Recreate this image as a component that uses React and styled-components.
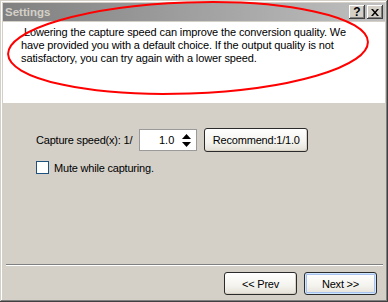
import React from "react";
import styled, { createGlobalStyle } from "styled-components";

const GlobalStyle = createGlobalStyle`
  html, body { margin: 0; padding: 0; background: #d4d0c8; }
  body { font-family: "Liberation Sans", Arial, sans-serif; }
`;

const Window = styled.div`
  position: relative;
  box-sizing: border-box;
  width: 388px;
  height: 302px;
  padding: 3px;
  background: #d4d0c8;
  box-shadow: inset -1px -1px #404040, inset 1px 1px #d4d0c8,
    inset -2px -2px #808080, inset 2px 2px #ffffff;
  display: flex;
  flex-direction: column;
  overflow: hidden;
`;

const TitleBar = styled.div`
  height: 18px;
  margin-bottom: 1px;
  display: flex;
  align-items: center;
  padding: 0 2px 0 2px;
  background: linear-gradient(to right, #808080, #c0c0c0);
`;

const TitleText = styled.span`
  font-family: "Liberation Sans", Arial, sans-serif;
  font-weight: bold;
  font-size: 11.5px;
  color: #d4d0c8;
`;

const TitleButtons = styled.div`
  margin-left: auto;
  display: flex;
  gap: 2px;
`;

const TitleButton = styled.div`
  width: 16px;
  height: 14px;
  box-sizing: border-box;
  background: #d4d0c8;
  box-shadow: inset -1px -1px #404040, inset 1px 1px #ffffff,
    inset -2px -2px #808080;
  display: flex;
  align-items: center;
  justify-content: center;
  font-family: "Liberation Sans", Arial, sans-serif;
  font-weight: bold;
  font-size: 12px;
  line-height: 1;
  color: #000;
`;

const Header = styled.div`
  height: 81px;
  background: #ffffff;
  box-sizing: border-box;
  padding: 4px 6px 0 18px;
`;

const HeaderText = styled.p`
  margin: 0;
  font-size: 11px;
  line-height: 13px;
  color: #000;
  letter-spacing: -0.12px;
  white-space: nowrap;
`;

const Body = styled.div`
  flex: 1;
  display: flex;
  flex-direction: column;
  padding: 25px 0 0 33px;
`;

const Row = styled.div`
  display: flex;
  align-items: center;
  gap: ${(p) => p.$gap || 0}px;
  margin-top: ${(p) => p.$mt || 0}px;
`;

const Label = styled.span`
  font-size: 11px;
  color: #000;
  letter-spacing: -0.2px;
`;

const SpinBox = styled.div`
  box-sizing: border-box;
  width: 58px;
  height: 22px;
  border: 1px solid #9a9a9a;
  background: #fff;
  display: flex;
  align-items: center;
`;

const SpinValue = styled.span`
  flex: 1;
  text-align: right;
  font-size: 11px;
  color: #000;
  padding-right: 5px;
`;

const SpinArrows = styled.div`
  width: 14px;
  margin-right: 3px;
  display: flex;
  flex-direction: column;
  align-items: center;
  gap: 3px;
`;

const XPButton = styled.button`
  box-sizing: border-box;
  width: ${(p) => p.$w}px;
  height: ${(p) => p.$h}px;
  margin: 0;
  padding: 0;
  border: 1px solid #2b2b2b;
  border-radius: 3px;
  background: linear-gradient(to bottom, #ffffff 0%, #f4f3ee 60%, #e3e0d6 100%);
  box-shadow: ${(p) =>
    p.$default
      ? "inset 0 0 0 1px #cee7ff, inset 0 0 0 2px #a8c2f0"
      : "inset -1px -1px 0 #d6d0c5"};
  font-family: "Liberation Sans", Arial, sans-serif;
  font-size: 11px;
  color: #000;
  letter-spacing: -0.2px;
  display: flex;
  align-items: center;
  justify-content: center;
`;

const CheckBox = styled.div`
  box-sizing: border-box;
  width: 13px;
  height: 13px;
  border: 1px solid #1c5180;
  background: #ffffff;
`;

const Footer = styled.div`
  display: flex;
  flex-direction: column;
  padding-bottom: 4px;
`;

const Separator = styled.div`
  height: 1px;
  margin: 0 2px 0 3px;
  background: #808080;
  border-bottom: 1px solid #ffffff;
`;

const ButtonRow = styled.div`
  display: flex;
  justify-content: flex-end;
  gap: 7px;
  padding: 6px 8px 0 0;
`;

const Annotation = styled.svg`
  position: absolute;
  left: 0;
  top: 0;
  pointer-events: none;
`;

export default function App() {
  return (
    <>
      <GlobalStyle />
      <Window>
        <TitleBar>
          <TitleText>Settings</TitleText>
          <TitleButtons>
            <TitleButton>?</TitleButton>
            <TitleButton>
              <svg width="8" height="7" viewBox="0 0 8 7">
                <path d="M0 0h2l2 2.5L6 0h2L5 3.5 8 7H6L4 4.5 2 7H0l3-3.5z" fill="#000" />
              </svg>
            </TitleButton>
          </TitleButtons>
        </TitleBar>
        <Header>
          <HeaderText>
            &nbsp;Lowering the capture speed can improve the conversion quality. We
            <br />
            have provided you with a default choice. If the output quality is not
            <br />
            satisfactory, you can try again with a lower speed.
          </HeaderText>
        </Header>
        <Body>
          <Row $gap={7}>
            <Label>Capture speed(x): 1/</Label>
            <SpinBox>
              <SpinValue>1.0</SpinValue>
              <SpinArrows>
                <svg width="9" height="5" viewBox="0 0 9 5">
                  <path d="M4.5 0L9 5H0z" fill="#000" />
                </svg>
                <svg width="9" height="5" viewBox="0 0 9 5">
                  <path d="M0 0h9L4.5 5z" fill="#000" />
                </svg>
              </SpinArrows>
            </SpinBox>
            <XPButton $w={104} $h={24}>Recommend:1/1.0</XPButton>
          </Row>
          <Row $gap={5} $mt={9}>
            <CheckBox />
            <Label>Mute while capturing.</Label>
          </Row>
        </Body>
        <Footer>
          <Separator />
          <ButtonRow>
            <XPButton $w={73} $h={23}>&lt;&lt; Prev</XPButton>
            <XPButton $w={73} $h={23} $default>Next &gt;&gt;</XPButton>
          </ButtonRow>
        </Footer>
        <Annotation width="388" height="302">
          <ellipse
            cx="188"
            cy="48"
            rx="180"
            ry="45.5"
            transform="rotate(-2 188 48)"
            fill="none"
            stroke="#ff0000"
            strokeWidth="2"
          />
        </Annotation>
      </Window>
    </>
  );
}
